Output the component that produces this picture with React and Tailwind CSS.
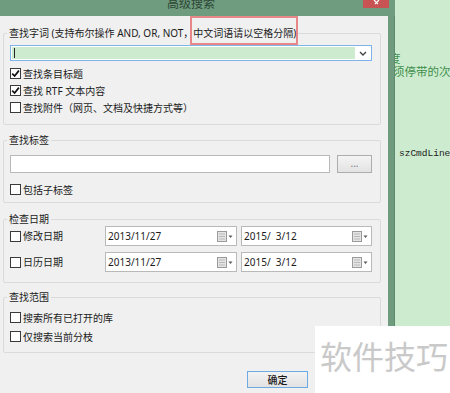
import React from "react"

const Check = ({ checked }) => (
    <span className="w-[11px] h-[11px] border border-[#3a3a3a] bg-white flex items-center justify-center shrink-0">
        {checked && (
            <svg width="9" height="9" viewBox="0 0 9 9">
                <path d="M1.2 4.6 L3.6 7 L7.9 1.6" stroke="#111" strokeWidth="1.7" fill="none" />
            </svg>
        )}
    </span>
)

const CheckRow = ({ checked, label, h = "h-[17px]" }) => (
    <div className={`flex items-center gap-[2px] ${h}`}>
        <Check checked={checked} />
        <span className="whitespace-pre">{label}</span>
    </div>
)

const CalIcon = () => (
    <svg width="16" height="11" viewBox="0 0 16 11">
        <rect x="0.5" y="0.5" width="9" height="10" fill="#e4e4e4" stroke="#9a9a9a" />
        <rect x="2" y="2.5" width="6" height="1" fill="#b9b9b9" />
        <rect x="2" y="5" width="6" height="1" fill="#b9b9b9" />
        <rect x="2" y="7.5" width="6" height="1" fill="#b9b9b9" />
        <path d="M11.5 4.5 L15.5 4.5 L13.5 7 Z" fill="#5a5a5a" />
    </svg>
)

const DateBox = ({ value, w }) => (
    <div className={`${w} h-[20px] border border-[#b9b9b9] bg-white flex items-center pl-[2px] pr-[3px]`}>
        <span className="flex-1 whitespace-pre text-[10px]">{value}</span>
        <CalIcon />
    </div>
)

const Group = ({ legend, children, className = "" }) => (
    <fieldset className={`border border-[#dadada] rounded-[2px] pl-[6px] pr-[8px] ${className}`}>
        <legend className="-ml-[3px] px-[2px] text-[10px] leading-[14px]">{legend}</legend>
        {children}
    </fieldset>
)

export default function App() {
    return (
        <div className="relative w-[450px] h-[393px] overflow-hidden flex bg-[#cdeccf] text-[10px] leading-[14px] text-[#1b1b1b] font-['Noto_Sans','Noto_Sans_CJK_SC',sans-serif]">
            <div className="w-[395px] shrink-0 flex flex-col">
                {/* title bar */}
                <div className="h-[16px] bg-[#6f9b7e] flex overflow-hidden">
                    <span className="ml-[167px] -mt-[4px] text-[12px] leading-[14px] text-[#2c4735] font-['Noto_Sans_CJK_SC',sans-serif]">高级搜索</span>
                    <div className="ml-auto mr-[6px] w-[26px] h-[8px] bg-[#c75352] flex justify-center">
                        <svg width="7" height="5" viewBox="0 0 7 5">
                            <path d="M1 0 L5 4 M6 0 L2 4" stroke="#fff" strokeWidth="1.2" />
                        </svg>
                    </div>
                </div>

                <div className="flex flex-1">
                    <div className="w-[388px] bg-[#f0f0f0] pt-[10px] pl-[3px] pr-[7px] flex flex-col">
                        <Group
                            className="pb-[8px]"
                            legend={
                                <>
                                    查找字词 (支持布尔操作 AND, OR, NOT，
                                    <span className="relative">
                                        中文词语请以空格分隔)
                                        <span className="absolute -left-[3px] -right-[2px] -top-[10px] -bottom-[5px] border-2 border-[#e88787]" />
                                    </span>
                                </>
                            }
                        >
                            <div className="mt-[5px] h-[16px] border border-[#7eb4ea] bg-white flex">
                                <div className="w-[343px] my-[1px] ml-[1px] bg-[#cdeccf] flex items-center pl-[2px]">
                                    <span className="w-px h-[10px] bg-[#222]" />
                                </div>
                                <div className="flex-1 flex items-center justify-center">
                                    <svg width="8" height="5" viewBox="0 0 8 5">
                                        <path d="M1 1 L4 4 L7 1" stroke="#444" strokeWidth="1.4" fill="none" />
                                    </svg>
                                </div>
                            </div>
                            <div className="mt-[4px]">
                                <CheckRow checked label="查找条目标题" />
                                <CheckRow checked label="查找 RTF 文本内容" />
                                <CheckRow label="查找附件（网页、文档及快捷方式等）" />
                            </div>
                        </Group>

                        <Group legend="查找标签" className="mt-[8px] pb-[4px]">
                            <div className="mt-[8px] flex gap-[7px]">
                                <div className="w-[320px] h-[18px] border border-[#b9b9b9] bg-white" />
                                <div className="w-[35px] h-[18px] border border-[#adadad] bg-gradient-to-b from-[#f4f4f4] to-[#e3e3e3] flex items-center justify-center text-[#7a7a7a] leading-none pb-[3px]">
                                    ...
                                </div>
                            </div>
                            <div className="mt-[8px]">
                                <CheckRow label="包括子标签" />
                            </div>
                        </Group>

                        <Group legend="检查日期" className="mt-[9px] pb-[10px]">
                            <div className="flex flex-col gap-[6px]">
                                <div className="flex items-center">
                                    <div className="w-[95px]">
                                        <CheckRow label="修改日期" />
                                    </div>
                                    <DateBox value="2013/11/27" w="w-[132px]" />
                                    <div className="w-[4px]" />
                                    <DateBox value="2015/  3/12" w="w-[131px]" />
                                </div>
                                <div className="flex items-center">
                                    <div className="w-[95px]">
                                        <CheckRow label="日历日期" />
                                    </div>
                                    <DateBox value="2013/11/27" w="w-[132px]" />
                                    <div className="w-[4px]" />
                                    <DateBox value="2015/  3/12" w="w-[131px]" />
                                </div>
                            </div>
                        </Group>

                        <Group legend="查找范围" className="mt-[7px] pb-[6px]">
                            <div className="mt-[4px]">
                                <CheckRow label="搜索所有已打开的库" h="h-[19px]" />
                                <CheckRow label="仅搜索当前分枝" h="h-[19px]" />
                            </div>
                        </Group>

                        <div className="mt-[18px] flex justify-end pr-[73px]">
                            <div className="w-[61px] h-[17px] border border-[#6fa9e2] bg-gradient-to-b from-[#f3f3f3] to-[#e2e2e2] flex items-center justify-center text-[10px] font-medium">
                                确定
                            </div>
                        </div>
                    </div>
                    <div className="flex-1 bg-[#6f9b7e] border-r border-[#5f8a6d]" />
                </div>
            </div>

            {/* editor behind the dialog */}
            <div className="flex-1 overflow-hidden pt-[52px] text-[11.5px] leading-[13px] text-[#3f8f4c] font-['Noto_Sans_CJK_SC',sans-serif]">
                <div className="-ml-[6px] whitespace-nowrap">度</div>
                <div className="-ml-[2px] whitespace-nowrap">须停带的次</div>
                <div className="mt-[69px] ml-[4px] whitespace-nowrap text-[#222] text-[9.5px] font-['Liberation_Mono',monospace]">szCmdLine</div>
            </div>

            {/* watermark */}
            <div className="absolute left-[315px] top-[326px] w-[135px] h-[67px] bg-white pl-[5px] pt-[12px] text-[32px] leading-[34px] text-[#c9c9c9] font-['Noto_Sans_CJK_SC',sans-serif] whitespace-nowrap">
                软件技巧
            </div>
        </div>
    )
}
